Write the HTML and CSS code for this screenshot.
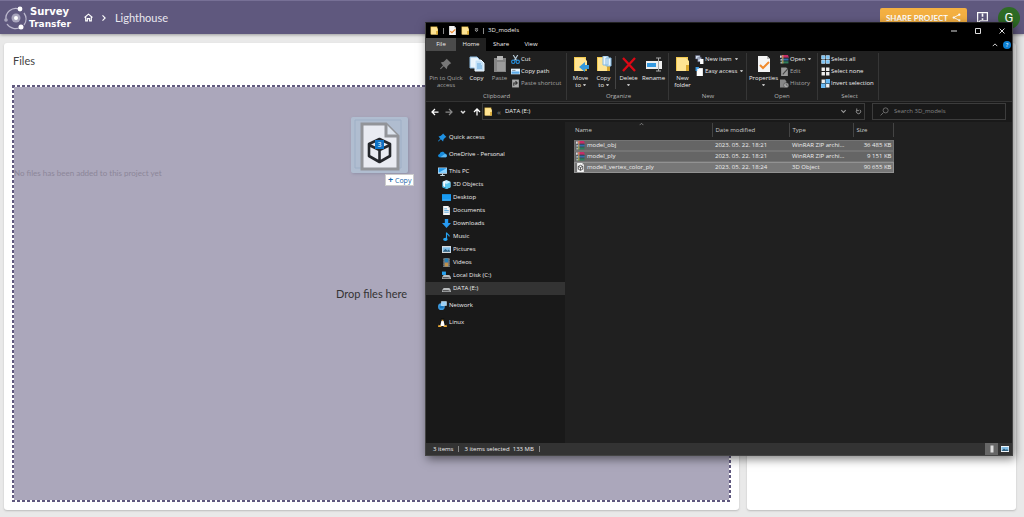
FILE: index.html
```html
<!DOCTYPE html>
<html lang="en">
<head>
<meta charset="utf-8">
<title>Survey Transfer - Lighthouse</title>
<link rel="stylesheet" href="styles.css">
</head>
<body>
<svg class="defs" aria-hidden="true">
  <symbol id="folder" viewBox="0 0 16 16"><path fill="#f2c94f" d="M1 1h12v14H1z"/><path fill="#ffe493" d="M2 2h9l3 3v10H2z"/><path fill="#d9a72f" d="M11 9h3v6h-3z"/></symbol>
  <symbol id="page" viewBox="0 0 16 16"><path fill="#f4f4f4" d="M2 0h9l3 3v13H2z"/><path fill="#bbb" d="M11 0v3h3z"/></symbol>
  <symbol id="check" viewBox="0 0 16 16"><use href="#page"/><path fill="none" stroke="#f08a2c" stroke-width="2" d="M4 9l3 3 6-6"/></symbol>
  <symbol id="pin" viewBox="0 0 16 16"><path d="M9 1l6 6-2 1-3 3-1 4-4-4-4 4-1-1 4-4-3-4 4-1 3-3z"/></symbol>
  <symbol id="pages" viewBox="0 0 16 16"><path fill="#e9f3fb" stroke="#8ebce2" d="M1 1h7l2 2v9H1z"/><path fill="#c5e1f7" stroke="#eff8ff" d="M6 4h6l3 3v8H6z"/><path stroke="#67a8dd" d="M8 8h4M8 10h5M8 12h5"/></symbol>
  <symbol id="paste" viewBox="0 0 16 16"><path fill="#858585" d="M2 2h12v14H2z"/><path fill="#b5b5b5" d="M5 0h6v4H5z"/><path fill="#9c9c9c" d="M5 6h8v9H5z"/></symbol>
  <symbol id="cut" viewBox="0 0 16 16"><path stroke="#b7cbd9" stroke-width="2" d="M4 0l6 10M12 0L6 10"/><g fill="none" stroke="#288fdc" stroke-width="2"><circle cx="4" cy="12" r="3"/><circle cx="12" cy="12" r="3"/></g></symbol>
  <symbol id="path" viewBox="0 0 16 16"><path fill="#e3f2fd" d="M0 3h16v10H0z"/><path fill="#5ba9e6" d="M1 8h14v4H1z"/><path stroke="#345" d="M2 6h6"/></symbol>
  <symbol id="shortcut" viewBox="0 0 16 16"><path fill="#aaa" d="M2 1h12v14H2z"/><path fill="none" stroke="#333" stroke-width="2" d="M5 12V7h6M8 4l3 3-3 3"/></symbol>
  <symbol id="move" viewBox="0 0 16 16"><use href="#folder"/><path fill="#3498dc" d="M16 9h-4V6l-6 5 6 5v-3h4z"/></symbol>
  <symbol id="copyto" viewBox="0 0 16 16"><use href="#folder"/><path fill="#e8f3fb" stroke="#83b9e2" d="M7 0h5v9H7zM10 2h5v8h-5z"/></symbol>
  <symbol id="delete" viewBox="0 0 16 16"><path fill="none" stroke="#dc0815" stroke-width="2.300" d="M2 2l12 13M14 2L2 15"/></symbol>
  <symbol id="rename" viewBox="0 0 16 16"><path fill="#eee" d="M0 5h16v8H0z"/><path fill="#3599df" d="M1 7h9v4H1z"/><path fill="none" stroke="#aaa" d="M10 2h5M10 15h5M12.500 2v13"/></symbol>
  <symbol id="newitem" viewBox="0 0 16 16"><path fill="#d9eaf7" stroke="#557" d="M1 1h8v6H1zM5 4h6v8H5z"/><path fill="#fff" d="M9 7h6v9H9z"/></symbol>
  <symbol id="access" viewBox="0 0 16 16"><path fill="#fff" d="M3 2h11v14H3z"/><path fill="#3c9be2" d="M1 0h6v3H4v4H1z"/></symbol>
  <symbol id="rar" viewBox="0 0 16 16"><path fill="#c42c67" d="M3 0h11l2 5H3z"/><path fill="#2f6fae" d="M2 6h13v4H2z"/><path fill="#2f7d5c" d="M2 11h13v4H2z"/><path fill="#d8d9dd" d="M0 1h3v4H0zM1 7h2v3H1zM1 12h2v3H1z"/><path fill="#25303c" d="M3 5h12v1H3zM3 10h12v1H3z"/><path fill="#c9a05c" d="M4 0h2v15H4z"/></symbol>
  <symbol id="edit" viewBox="0 0 16 16"><path fill="#999" d="M2 1h9l3 3v12H2z"/><path stroke="#444" stroke-width="2" d="M5 13l9-10"/></symbol>
  <symbol id="history" viewBox="0 0 16 16"><path fill="#888" d="M0 1h9l2 3v11H0z"/><circle cx="11" cy="11" r="4.500" fill="#aaa" stroke="#444"/><path fill="none" stroke="#333" d="M11 8v3h3"/></symbol>
  <symbol id="all" viewBox="0 0 16 16"><path fill="#78c2f6" stroke="#d5edff" d="M1 1h6v6H1zM9 1h6v6H9zM1 9h6v6H1zM9 9h6v6H9z"/></symbol>
  <symbol id="none" viewBox="0 0 16 16"><path fill="#eee" d="M1 1h6v6H1zM9 1h6v6H9zM1 9h6v6H1zM9 9h6v6H9z"/></symbol>
  <symbol id="invert" viewBox="0 0 16 16"><use href="#none"/><path fill="#69b9f3" d="M8 0h8v8H8zM0 8h8v8H0z"/></symbol>
  <symbol id="cloud" viewBox="0 0 16 16"><path fill="#168bdc" d="M4 13C-1 13-1 8 3 7c1-5 8-5 9-1 5 0 5 7 1 7z"/><path fill="#5fb9f2" d="M4 13l8-6c4 0 5 6 1 6z"/></symbol>
  <symbol id="pc" viewBox="0 0 16 16"><path fill="#d5eafa" d="M0 1h16v11H0z"/><path fill="#2499ec" d="M1 2h14v8H1z"/><path fill="#8ed4ff" d="M1 10l14-8v8z"/><path stroke="#c4d7e4" stroke-width="2" d="M8 12v3M4 15h8"/></symbol>
  <symbol id="cube" viewBox="0 0 16 16"><path fill="#bdebff" d="M8 0l7 3v10l-7 3-7-3V3z"/><path fill="#159ed6" d="M1 4l7 3v9l-7-3z"/><path fill="#54c5ed" d="M15 4L8 7v9l7-3z"/><path fill="#f2fbff" d="M2 3l4-2v12l-4-2z"/></symbol>
  <symbol id="desktop" viewBox="0 0 16 16"><path fill="#189af1" d="M0 2h16v12H0z"/><path fill="#70c7ff" d="M1 12h14v1H1z"/></symbol>
  <symbol id="doc" viewBox="0 0 16 16"><use href="#page"/><path fill="none" stroke="#4ba0dd" stroke-width="1.500" d="M4 5h5M4 8h8M4 11h8"/></symbol>
  <symbol id="down" viewBox="0 0 16 16"><path fill="#279af1" d="M5 0h6v7h5l-8 9-8-9h5z"/></symbol>
  <symbol id="music" viewBox="0 0 16 16"><path fill="none" stroke="#27a5f4" stroke-width="2" d="M8 13V1c1 4 5 3 5 7"/><ellipse cx="6" cy="13" rx="4" ry="3" fill="#27a5f4"/></symbol>
  <symbol id="picture" viewBox="0 0 16 16"><path fill="#f0f5f9" d="M0 2h16v12H0z"/><path fill="#81bde5" d="M1 4h14v8H1z"/><path fill="#315f7e" d="M1 12l5-5 4 3 2-2 3 4z"/></symbol>
  <symbol id="video" viewBox="0 0 16 16"><path fill="#747e85" d="M2 0h12v16H2z"/><path fill="#2481b7" d="M5 1h6v6H5z"/><path fill="#c1934a" d="M5 9h6v6H5z"/><path stroke="#222" stroke-dasharray="2" d="M3 0v16M13 0v16"/></symbol>
  <symbol id="disk" viewBox="0 0 16 16"><path fill="#b9bcbe" d="M3 7h10l3 4v3H0v-3z"/><path fill="#444" d="M1 11h14v2H1z"/><path fill="#eee" d="M12 11h2v1h-2z"/></symbol>
  <symbol id="local" viewBox="0 0 16 16"><use href="#disk"/><path fill="#27a2ef" d="M0 1h7v6H0z"/></symbol>
  <symbol id="network" viewBox="0 0 16 16"><circle cx="6" cy="10" r="6" fill="#3d99dc"/><path fill="#98d0f7" stroke="#dcf1ff" d="M6 1h9v7H6z"/><path fill="#1774bb" d="M3 9h7v4H3z"/></symbol>
  <symbol id="linux" viewBox="0 0 16 16"><path fill="#101010" d="M5 0h6v6l4 8H1l4-8z"/><path fill="#fff" d="M6 5h4l2 9H4z"/><path fill="#e9a937" d="M1 12l5 2v2H0zM15 12l-5 2v2h6zM6 3h4L8 6z"/></symbol>
  <symbol id="object" viewBox="0 0 16 16"><use href="#page"/><path fill="none" stroke="#444" stroke-width="1.500" d="M8 4l4 2v5l-4 2-4-2V6zM4 6l4 2 4-2M8 8v5"/></symbol>
</svg>

<header class="topbar">
  <a class="brand" href="#" aria-label="Survey Transfer">
    <svg viewBox="0 0 24 26"><g fill="none" stroke="#bab6cc" stroke-width="1.300"><path d="M2 15A10 10 0 0 1 15 4M20 8a10 10 0 0 1 0 12M17 22A10 10 0 0 1 3 19"/></g><circle cx="12" cy="13" r="4.500" fill="#a9a5bd"/><circle cx="12" cy="13" r="2" fill="#fff"/><circle cx="16" cy="4" r="2.400" fill="#fff"/><circle cx="17" cy="22" r="2.500" fill="#fff"/><circle cx="2" cy="15" r="1.800" fill="#a9a5bd"/></svg>
    <span><span class="brand-first">Survey</span><span>Transfer</span></span>
  </a>
  <nav class="crumbs" aria-label="Breadcrumb">
    <a href="#" aria-label="Home"><svg viewBox="0 0 16 16"><path fill="none" stroke="#fff" stroke-width="2" d="M1 8l7-6 7 6M3 7v7h3v-4h4v4h3V7"/></svg></a>
    <svg class="crumb-arrow" viewBox="0 0 16 16"><path fill="none" stroke="#fff" stroke-width="3" d="M4 1l7 7-7 7"/></svg>
    <a href="#">Lighthouse</a>
  </nav>
  <div class="actions">
    <button class="share">SHARE PROJECT <svg viewBox="0 0 16 16"><path fill="none" stroke="#fff" stroke-width="1.500" d="M13 3L3 8l10 5"/><g fill="#fff"><circle cx="13" cy="3" r="2"/><circle cx="3" cy="8" r="2"/><circle cx="13" cy="13" r="2"/></g></svg></button>
    <button class="feedback" aria-label="Feedback"><svg viewBox="0 0 16 16"><path fill="none" stroke="#fff" stroke-width="1.500" d="M2 2h12v10H5l-3 3z"/><path stroke="#fff" stroke-width="2" d="M8 3v4M8 9v2"/></svg></button>
    <button class="avatar" aria-label="Account">G</button>
  </div>
</header>

<main class="workspace">
  <section class="card">
    <h1>Files</h1>
    <div class="dropzone"><div class="dropzone-fill">
      <p class="empty">No files has been added to this project yet</p>
      <p class="prompt">Drop files here</p>
    </div></div>
  </section>
  <aside class="card"></aside>
</main>

<div class="ghost">
  <svg viewBox="0 0 57 56"><path fill="none" stroke="#9eafc6" d="M4 3h46v48H4z"/><path fill="#e9ebf2" stroke="#929499" stroke-width="3" d="M11 7h24l12 12v33H11z"/><path fill="#dce3ed" stroke="#929499" stroke-width="3" d="M35 7v12h12"/><path fill="none" stroke="#24262b" stroke-width="2.600" stroke-linejoin="round" d="M28.500 22L39 27v12l-10.500 6L18 39V27zM18 28l10.500 5L39 28M28.500 33v12"/></svg>
  <span class="count">3</span>
  <span class="tip"><b>+</b> Copy</span>
</div>

<section class="explorer" aria-label="3D_models">
  <div class="titlebar">
    <svg><use href="#folder"/></svg><i></i><svg><use href="#check"/></svg><svg><use href="#folder"/></svg>
    <svg class="tiny" viewBox="0 0 16 16"><path fill="none" stroke="#ccc" stroke-width="2" d="M3 2h10M3 6h10l-5 6z"/></svg><i></i>
    <span>3D_models</span>
    <div class="controls">
      <button aria-label="Minimize"><svg viewBox="0 0 16 16"><path stroke="#ddd" stroke-width="2" d="M2 8h12"/></svg></button>
      <button aria-label="Maximize"><svg viewBox="0 0 16 16"><path fill="none" stroke="#ddd" stroke-width="2" d="M3 3h10v10H3z"/></svg></button>
      <button aria-label="Close"><svg viewBox="0 0 16 16"><path stroke="#ddd" stroke-width="2" d="M3 3l10 10M13 3L3 13"/></svg></button>
    </div>
  </div>
  <div class="tabs">
    <button class="file">File</button><button class="on">Home</button><button>Share</button><button>View</button>
    <div class="tab-tools"><svg viewBox="0 0 16 16"><path fill="none" stroke="#ddd" stroke-width="2.500" d="M2 11l6-6 6 6"/></svg><button class="help" aria-label="Help">?</button></div>
  </div>
  <div class="ribbon">
    <div class="group g-clip"><div class="tools">
      <button class="big pin dim"><svg><use href="#pin"/></svg>Pin to Quick access</button>
      <button class="big narrow"><svg><use href="#pages"/></svg>Copy</button>
      <button class="big narrow dim"><svg><use href="#paste"/></svg>Paste</button>
      <div class="stack"><button><svg><use href="#cut"/></svg>Cut</button><button><svg><use href="#path"/></svg>Copy path</button><button class="dim"><svg><use href="#shortcut"/></svg>Paste shortcut</button></div>
    </div><span>Clipboard</span></div>
    <div class="group g-org"><div class="tools">
      <button class="big narrow"><svg><use href="#move"/></svg>Move<br>to <em></em></button>
      <button class="big narrow"><svg><use href="#copyto"/></svg>Copy<br>to <em></em></button><hr>
      <button class="big"><svg><use href="#delete"/></svg>Delete<br><em></em></button>
      <button class="big"><svg><use href="#rename"/></svg>Rename</button>
    </div><span>Organize</span></div>
    <div class="group g-new"><div class="tools">
      <button class="big"><svg><use href="#folder"/></svg>New<br>folder</button>
      <div class="stack"><button><svg><use href="#newitem"/></svg>New item <em></em></button><button><svg><use href="#access"/></svg>Easy access <em></em></button></div>
    </div><span>New</span></div>
    <div class="group g-open"><div class="tools">
      <button class="big wide"><svg><use href="#check"/></svg>Properties<br><em></em></button>
      <div class="stack"><button><svg><use href="#rar"/></svg>Open <em></em></button><button class="dim"><svg><use href="#edit"/></svg>Edit</button><button class="dim"><svg><use href="#history"/></svg>History</button></div>
    </div><span>Open</span></div>
    <div class="group g-select"><div class="tools">
      <div class="stack"><button><svg><use href="#all"/></svg>Select all</button><button><svg><use href="#none"/></svg>Select none</button><button><svg><use href="#invert"/></svg>Invert selection</button></div>
    </div><span>Select</span></div>
  </div>
  <div class="address">
    <div class="arrows">
      <button aria-label="Back"><svg viewBox="0 0 16 16"><path fill="none" stroke="#fff" stroke-width="2.500" d="M15 8H2M8 2L2 8l6 6"/></svg></button>
      <button aria-label="Forward"><svg viewBox="0 0 16 16"><path fill="none" stroke="#888" stroke-width="2.500" d="M1 8h13M8 2l6 6-6 6"/></svg></button>
      <button aria-label="Recent"><svg viewBox="0 0 16 16"><path fill="none" stroke="#ddd" stroke-width="3" d="M4 6l4 4 4-4"/></svg></button>
      <button aria-label="Up"><svg viewBox="0 0 16 16"><path fill="none" stroke="#fff" stroke-width="2.500" d="M8 15V2M2 8l6-6 6 6"/></svg></button>
    </div>
    <div class="location"><svg><use href="#folder"/></svg><small>«</small><span>DATA (E:)</span>
      <button aria-label="Previous locations"><svg viewBox="0 0 16 16"><path fill="none" stroke="#999" stroke-width="2.500" d="M3 5l5 5 5-5"/></svg></button>
      <button aria-label="Refresh"><svg viewBox="0 0 16 16"><path fill="none" stroke="#999" stroke-width="2" d="M4 5a5 5 0 1 0 7-1M4 1v5h5"/></svg></button></div>
    <label class="search"><svg viewBox="0 0 16 16"><g fill="none" stroke="#777" stroke-width="1.500"><circle cx="10" cy="6" r="4.500"/><path d="M6 10l-5 5"/></g></svg><input type="search" aria-label="Search 3D_models" placeholder="Search 3D_models"></label>
  </div>
  <div class="body">
    <nav class="tree" aria-label="Folders">
      <a href="#"><svg class="blue"><use href="#pin"/></svg>Quick access</a>
      <a href="#"><svg><use href="#cloud"/></svg>OneDrive - Personal</a>
      <div>
        <a href="#"><svg><use href="#pc"/></svg>This PC</a>
        <a class="sub" href="#"><svg><use href="#cube"/></svg>3D Objects</a>
        <a class="sub" href="#"><svg><use href="#desktop"/></svg>Desktop</a>
        <a class="sub" href="#"><svg><use href="#doc"/></svg>Documents</a>
        <a class="sub" href="#"><svg><use href="#down"/></svg>Downloads</a>
        <a class="sub" href="#"><svg><use href="#music"/></svg>Music</a>
        <a class="sub" href="#"><svg><use href="#picture"/></svg>Pictures</a>
        <a class="sub" href="#"><svg><use href="#video"/></svg>Videos</a>
        <a class="sub" href="#"><svg><use href="#local"/></svg>Local Disk (C:)</a>
        <a class="sub current" href="#"><svg><use href="#disk"/></svg>DATA (E:)</a>
      </div>
      <a href="#"><svg><use href="#network"/></svg>Network</a>
      <a href="#"><svg><use href="#linux"/></svg>Linux</a>
    </nav>
    <div class="list">
      <svg class="sort" viewBox="0 0 16 16"><path fill="none" stroke="#aaa" stroke-width="2" d="M2 10l6-6 6 6"/></svg>
      <table>
        <thead><tr><th class="c-name">Name</th><th class="c-date">Date modified</th><th class="c-type">Type</th><th class="c-size">Size</th></tr></thead>
        <tbody>
          <tr><td><svg><use href="#rar"/></svg>model_obj</td><td>2023. 05. 22. 18:21</td><td>WinRAR ZIP archi...</td><td>36 485 KB</td></tr>
          <tr><td><svg><use href="#rar"/></svg>model_ply</td><td>2023. 05. 22. 18:21</td><td>WinRAR ZIP archi...</td><td>9 151 KB</td></tr>
          <tr class="focus"><td><svg><use href="#object"/></svg>modell_vertex_color_ply</td><td>2023. 05. 22. 18:24</td><td>3D Object</td><td>90 655 KB</td></tr>
        </tbody>
      </table>
    </div>
  </div>
  <footer class="status"><span>3 items</span><i></i><span>3 items selected&nbsp; 133 MB</span><i></i>
    <div class="views"><button class="active" aria-label="Details view"><svg viewBox="0 0 16 16"><path fill="#ddd" d="M5 1h6v14H5z"/></svg></button><button aria-label="Thumbnail view"><svg><use href="#picture"/></svg></button></div>
  </footer>
</section>
</body>
</html>
```
FILE: styles.css
```css
* { box-sizing: border-box; }
body { margin: 0; min-height: 100vh; display: flex; flex-direction: column; overflow: hidden; background: #e9e9e9; font: 11px/16px "Lato", sans-serif; color: #333; }
button { border: 0; margin: 0; padding: 0; background: none; color: inherit; font: inherit; }
a { color: inherit; text-decoration: none; }
svg { display: block; flex: none; }
.defs { position: absolute; width: 0; height: 0; }

.topbar { display: flex; align-items: center; height: 34px; padding: 0 4px; background: #5f587e; border-top: 1px solid #777096; box-shadow: 0 1px 3px #999; color: #fff; }
.brand { display: flex; align-items: center; gap: 1px; font: bold 9px/12px "DejaVu Sans", sans-serif; }
.brand svg { width: 24px; height: 26px; }
.brand span { display: block; }
.brand .brand-first { padding-left: 1px; font-size: 10px; }
.crumbs { display: flex; align-items: center; gap: 8px; padding-left: 13px; color: #e9e7ef; }
.crumbs svg { width: 9px; height: 9px; }
.crumbs .crumb-arrow { width: 6px; height: 6px; }
.actions { display: flex; align-items: center; gap: 9px; margin-left: auto; }
.share { display: flex; align-items: center; gap: 4px; height: 20px; padding: 0 6px; border-radius: 2px; background: #f4b042; font-weight: bold; font-size: 8px; }
.share svg { width: 9px; height: 9px; }
.feedback svg { width: 13px; height: 13px; }
.avatar { width: 22px; height: 22px; border-radius: 50%; background: #2e6b25; font: 13px/22px Roboto, sans-serif; }

.workspace { flex: 1; display: grid; grid-template-columns: 735fr 269fr; gap: 8px; padding: 9px 8px 7px 4px; }
.card { display: flex; flex-direction: column; padding: 9px 8px 8px; background: #fff; border-radius: 3px; box-shadow: 0 1px 2px #bbb; }
h1 { margin: 0; padding-left: 1px; font-size: 11px; line-height: 18px; font-weight: normal; color: #444; }
.dropzone { flex: 1; display: grid; margin-top: 15px; padding: 2px; background: repeating-linear-gradient(90deg, #5f587e 0 3px, #fff 3px 5px) top / 100% 2px no-repeat, repeating-linear-gradient(90deg, #5f587e 0 3px, #fff 3px 5px) bottom / 100% 2px no-repeat, repeating-linear-gradient(#5f587e 0 3px, #fff 3px 5px) left / 2px 100% no-repeat, repeating-linear-gradient(#5f587e 0 3px, #fff 3px 5px) right / 2px 100% no-repeat; }
.dropzone-fill { display: grid; background: #aba7bb; }
.dropzone p { grid-area: 1 / 1; margin: 0; }
.empty { padding-top: 78px; font-size: 8px; color: #8b8699; }
.prompt { place-self: center; }

.ghost { position: absolute; left: 351px; top: 117px; width: 57px; background: #b0bdd0; border-radius: 2px; box-shadow: 1px 1px 3px #9090a8; font: 7px/9px "Open Sans", sans-serif; }
.ghost svg { width: 100%; }
.count { position: absolute; left: 24px; top: 23px; width: 9px; background: #0f72c6; color: #fff; text-align: center; }
.tip { position: absolute; left: 34px; top: 57px; padding: 0 2px; background: #fff; border: 1px solid #ccc; color: #2467a8; white-space: nowrap; }
.tip b { font-size: 9px; }

.explorer { position: absolute; left: 425px; right: 11px; top: 22px; border: 1px solid #444; border-top-color: #222; background: #191919; box-shadow: 2px 3px 9px rgba(0, 0, 0, .5); color: #eee; font: 6px/9px "Open Sans", sans-serif; }
.explorer svg { width: 9px; height: 9px; }
.titlebar { display: flex; align-items: center; gap: 4px; height: 15px; padding-left: 4px; background: #000; }
.titlebar i, .status i { width: 1px; height: 6px; background: #888; }
.titlebar .tiny { width: 5px; height: 5px; }
.controls { display: flex; gap: 16px; margin-left: auto; padding-right: 6px; }
.explorer .controls svg { width: 8px; height: 8px; }
.tabs { display: flex; height: 13px; background: #000; }
.tabs > button { width: 30px; }
.tabs .file { background: #4b4b4b; }
.tabs .on { background: #202020; }
.tab-tools { display: flex; align-items: center; gap: 5px; margin-left: auto; padding-right: 1px; }
.explorer .tab-tools svg { width: 6px; height: 6px; }
.help { width: 8px; height: 8px; border-radius: 50%; background: #0d7fd3; color: #fff; line-height: 8px; }
.ribbon { display: flex; height: 51px; padding-top: 2px; background: #202020; border-bottom: 1px solid #333; white-space: nowrap; }
.group { display: flex; flex-direction: column; border-right: 1px solid #363636; height: 47px; }
.group > span { text-align: center; color: #b5b5b5; line-height: 8px; }
.tools { display: flex; height: 39px; flex: none; }
.g-clip { width: 141px; padding-left: 1px; }
.g-org { width: 102px; padding-left: 2px; }
.g-new { width: 78px; padding-left: 1px; }
.g-open { width: 71px; }
.g-select { width: 61px; padding-left: 3px; }
.big { width: 25px; display: block; padding-top: 3px; line-height: 7px; text-align: center; white-space: normal; align-self: flex-start; }
.big svg { margin: 0 auto 3px; }
.explorer .big svg { width: 16px; height: 16px; }
.narrow { width: 23px; }
.wide { width: 33px; }
.pin { width: 38px; }
.pin svg { padding: 2px; fill: #777; }
.dim { color: #a5a5a5; }
.tools hr { margin: 3px 0; border: 0; border-left: 1px solid #444; }
.stack button { display: flex; align-items: center; gap: 1px; height: 12px; }
em { display: inline-block; border: 1px solid transparent; border-top-color: #bbb; border-width: 2px 1px 0; width: 3px; vertical-align: middle; }
.stack em { margin-left: 2px; }
.address { display: flex; gap: 7px; height: 20px; padding: 1px 6px 2px 5px; }
.arrows { display: flex; gap: 6px; align-items: center; width: 44px; }
.explorer .arrows svg { width: 8px; height: 8px; }
.location, .search { display: flex; align-items: center; border: 1px solid #3c3c3c; }
.location { flex: 1; gap: 4px; padding: 0 2px 0 1px; }
.location span { margin-right: auto; }
.location small { font-size: 8px; color: #888; }
.location button { margin-left: 4px; }
.explorer .location button svg { width: 7px; height: 7px; }
.search { width: 134px; gap: 5px; padding-left: 7px; }
.search input { width: 100%; min-width: 0; padding: 0; border: 0; outline: 0; background: none; color: #858585; font: inherit; }
.search input::placeholder { color: #858585; }
.body { display: flex; min-height: 321px; }
.tree { display: flex; flex-direction: column; gap: 4px; width: 139px; padding-top: 9px; }
.tree a { display: flex; align-items: center; gap: 2px; height: 13px; padding-left: 12px; }
.tree .sub { padding-left: 16px; }
.tree .current { background: #333; }
.blue { fill: #1f91e2; }
.list { flex: 1; position: relative; padding: 1px 0 0 9px; background: #202020; }
.explorer .sort { position: absolute; left: 74px; top: 0; width: 5px; height: 5px; }
table { width: 320px; table-layout: fixed; border-collapse: collapse; white-space: nowrap; }
th { height: 14px; padding: 0 3px; border-right: 1px solid #444; text-align: left; font-weight: normal; color: #ccc; }
th:first-child { padding-left: 1px; }
thead::after { content: ""; display: block; height: 3px; }
.c-name { width: 138px; }
.c-date { width: 77px; }
.c-type { width: 64px; }
td { height: 11px; padding: 0 3px; line-height: 9px; }
td:first-child { display: flex; align-items: center; gap: 2px; padding-left: 2px; }
td:last-child { text-align: right; padding-right: 2px; }
tbody tr { background: #656565; outline: 1px solid #747474; outline-offset: -1px; }
tbody .focus { background: #777; outline-color: #929292; }
.status { display: flex; align-items: center; gap: 5px; height: 12px; padding-left: 7px; background: #333; }
.views { display: flex; margin-left: auto; padding-right: 1px; }
.views button { display: grid; place-items: center; width: 13px; height: 12px; }
.views .active { background: #666; }
.explorer .views svg { width: 8px; height: 8px; }
```
